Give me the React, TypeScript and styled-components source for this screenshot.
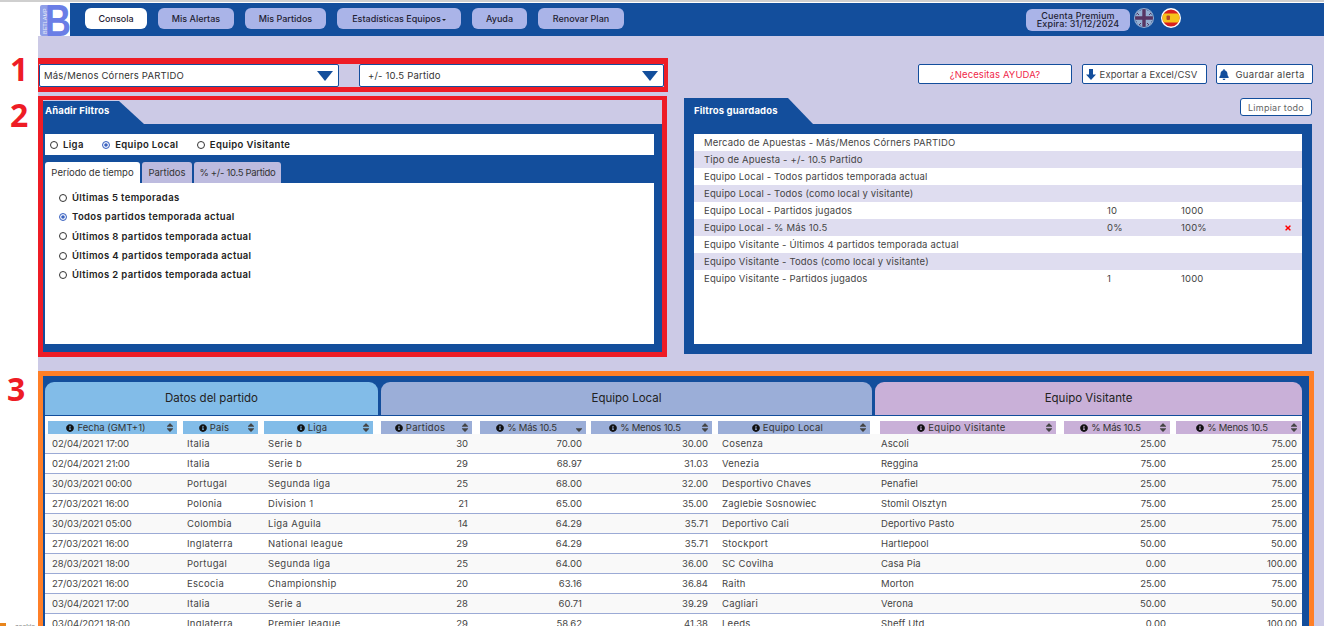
import React from 'react';
import styled, { createGlobalStyle } from 'styled-components';
import { FaInfoCircle, FaSort, FaSortDown, FaBell, FaTimes } from 'react-icons/fa';

const BLUE = '#134e9c';
const LAV = '#cccae6';
const FONT = `Inter, "Noto Sans", "Liberation Sans", sans-serif`;

const Global = createGlobalStyle`
  html, body { margin: 0; padding: 0; background: #fff; overflow: hidden; }
  * { box-sizing: border-box; }
  body { font-family: ${FONT}; color: #333; }
`;

const Page = styled.div`
  position: relative; width: 1324px; height: 626px; overflow: hidden;
  padding-left: 38px; background: #fff; border-top: 2px solid #cfcfcf;
`;
const Main = styled.div`
  height: 624px; background: ${LAV}; padding-top: 1px; margin-top: 0;
  box-shadow: inset 0 1px 0 #fff;
`;
const Nav = styled.nav`
  display: flex; align-items: flex-start; height: 33px; background: ${BLUE}; gap: 11px;
`;
const LogoBox = styled.div`
  width: 32px; height: 33px; background: #fff; margin-right: 4px; flex: none;
`;
const NavButton = styled.button<{ $w: number; $active?: boolean }>`
  width: ${p => p.$w}px; height: 21px; margin-top: 5px; border: 0; border-radius: 6px; padding: 0;
  background: ${p => (p.$active ? '#fff' : '#aab4e8')}; color: #1f2233;
  font: 500 9px ${FONT}; flex: none;
`;
const Caret = styled.span`
  display: inline-block; margin-left: 1px; vertical-align: 1px;
  border-left: 2.5px solid transparent; border-right: 2.5px solid transparent; border-top: 2.5px solid #222;
`;
const NavRight = styled.div`
  margin-left: auto; margin-right: 143px; display: flex; align-items: center; height: 33px; gap: 4px;
`;
const Premium = styled.div`
  width: 104px; height: 22px; margin-right: 0; border-radius: 6px; background: #aab4e8; color: #1f2233;
  font: 500 9px/8px ${FONT}; text-align: center; padding-top: 3px; letter-spacing: .15px;
`;
const Flag = styled.svg<{ $dim?: boolean; $first?: boolean }>`
  width: 20px; height: 20px; margin-top: -3px; flex: none;
  margin-left: ${p => (p.$first ? 0 : 3)}px;
  opacity: ${p => (p.$dim ? .55 : 1)};
  filter: ${p => (p.$dim ? 'saturate(.6)' : 'none')};
`;

const TopRow = styled.div`
  display: flex; align-items: flex-start; margin-top: 22px; height: 34px; padding-right: 11px;
`;
const SelectFrame = styled.div`
  display: flex; gap: 20px; width: 630px; height: 34px;
  border: solid #ee1c25; border-width: 6px 4px 5px 1px;
`;
const Select = styled.div<{ $w: number }>`
  width: ${p => p.$w}px; height: 23px; display: flex; align-items: center; justify-content: space-between;
  padding: 0 5px 0 4px; background: #fff; border: 1px solid ${BLUE}; border-radius: 2px;
  font: 400 9.5px ${FONT}; color: #333; letter-spacing: .2px;
`;
const SelectText = styled.span<{ $indent?: boolean }>`
  padding-left: ${p => (p.$indent ? 4 : 0)}px;
`;
const Arrow = styled.span`
  border-left: 8px solid transparent; border-right: 8px solid transparent; border-top: 10px solid ${BLUE};
`;
const Actions = styled.div`
  margin-left: auto; margin-top: 6px; display: flex; gap: 9.5px;
`;
const ActionButton = styled.button<{ $w: number; $red?: boolean }>`
  width: ${p => p.$w}px; height: 20px; display: flex; align-items: center; justify-content: center; gap: 4px;
  background: #fff; border: 1px solid ${BLUE}; border-radius: 2px; padding: 0;
  color: ${p => (p.$red ? '#f0284a' : '#444')}; font: 400 9.5px ${FONT}; letter-spacing: .1px;
  svg { color: ${BLUE}; flex: none; }
`;
const ExportAction = styled(ActionButton)`
  padding-right: 5px;
`;
const BellAction = styled(ActionButton)`
  gap: 6px; letter-spacing: .35px; padding-right: 5px;
`;
const ArrowGlyph = styled.svg`
  width: 10px; height: 11px; fill: ${BLUE};
`;
const BellGlyph = styled(FaBell)`
  width: 10px; height: 11px;
`;

const MidRow = styled.div`
  display: flex; align-items: flex-start; margin-top: 4px;
`;
const FilterFrame = styled.section`
  width: 629px; height: 261px; flex: none; border: solid #ee1c25; border-width: 4px 5px 5px 5px;
  display: flex; flex-direction: column;
`;
const TabShape = styled.div<{ $w: number }>`
  width: ${p => p.$w}px; flex: none; background: ${BLUE}; color: #fff; font: 700 9.5px ${FONT}; letter-spacing: .15px;
  display: flex; align-items: center; padding-bottom: 4px;
  clip-path: polygon(0 0, calc(100% - 25px) 0, 100% 100%, 0 100%);
`;
const FilterTab = styled(TabShape)`
  height: 23px; margin-top: 1px; padding-left: 2px;
`;
const FilterBody = styled.div`
  flex: 1; background: ${BLUE}; padding: 10px 8px 8px 2px; display: flex; flex-direction: column;
`;
const RadioBar = styled.div`
  height: 21px; background: #fff; display: flex; align-items: center; padding-left: 5px; gap: 18.5px;
`;
const RadioLabel = styled.label`
  display: flex; align-items: center; gap: 5px; font: 600 9.5px ${FONT}; color: #222; letter-spacing: .36px;
`;
const Dot = styled.span<{ $on?: boolean }>`
  width: 8px; height: 8px; border-radius: 50%; flex: none; background: #fff;
  border: 1px solid ${p => (p.$on ? '#3a62c0' : '#333')};
  box-shadow: ${p => (p.$on ? 'inset 0 0 0 1.2px #fff, inset 0 0 0 3px #3a62c0' : 'none')};
`;
const Tabs = styled.div`
  display: flex; gap: 2px; margin-top: 7px; height: 21px;
`;
const Tab = styled.div<{ $w: number; $active?: boolean; $tight?: boolean }>`
  width: ${p => p.$w}px; border-radius: 3px 3px 0 0; display: flex; align-items: center; justify-content: center;
  background: ${p => (p.$active ? '#fff' : '#bdbbdf')}; color: #333; font: 400 9.5px ${FONT};
  letter-spacing: ${p => (p.$tight ? '-.3px' : '0')};
`;
const TabPanel = styled.div`
  flex: 1; background: #fff; padding: 5px 0 0 14px; display: flex; flex-direction: column;
`;
const PeriodRow = styled(RadioLabel)<{ $h: number }>`
  height: ${p => p.$h}px;
`;

const SavedCol = styled.section`
  margin-left: 17px; width: 628px; padding-top: 2px; position: relative;
`;
const SavedHead = styled.div`
  display: flex; justify-content: space-between; align-items: flex-start; height: 26px;
`;
const SavedTab = styled(TabShape)`
  height: 26px; padding-left: 10px; padding-bottom: 2px;
`;
const ClearButton = styled.button`
  width: 72px; height: 18px; background: #fff; border: 1px solid ${BLUE}; border-radius: 3px; padding: 0;
  color: #666; font: 400 9px ${FONT}; letter-spacing: .25px;
`;
const SavedBody = styled.div`
  height: 230px; background: ${BLUE}; padding: 10px;
`;
const SavedList = styled.div`
  height: 210px; background: #fff;
`;
const SavedRow = styled.div`
  display: grid; grid-template-columns: 403px 74px 1fr 18px; align-items: center; height: 17px; padding-left: 10px;
  font: 400 9.5px ${FONT}; color: #444; letter-spacing: .17px;
  &:nth-child(even) { background: #dfddf0; }
  svg { color: #f00; width: 8px; height: 8px; display: block; }
`;

const TableFrame = styled.section`
  margin-top: 14px; width: 1276px; height: 260px; border: solid #ff7f27; border-width: 5px 5px 0 5px;
  background: ${BLUE}; padding: 6px 7px 0 2px; overflow: hidden;
`;
const Groups = styled.div`
  display: flex; gap: 3px; height: 33px;
`;
const Group = styled.div<{ $w: number; $bg: string }>`
  width: ${p => p.$w}px; background: ${p => p.$bg}; border-radius: 9px 9px 0 0; padding-bottom: 2px;
  display: flex; align-items: center; justify-content: center; font: 400 11.5px ${FONT}; color: #222;
`;
const TableArea = styled.div`
  margin-top: 1px; background: #fff; padding-top: 5px; height: 220px;
`;
const Row = styled.div<{ $cols: string }>`
  display: grid; grid-template-columns: ${p => p.$cols};
`;
const BodyRow = styled(Row)`
  height: 20px; border-bottom: 1px solid #9baad5;
  &:nth-child(odd) { background: #f9f9f9; }
`;
const HeadCell = styled.div<{ $l: number; $r: number; $bg: string; $sp: number }>`
  margin: 0 ${p => p.$r}px 0 ${p => p.$l}px; height: 13px; background: ${p => p.$bg};
  position: relative; display: flex; align-items: center; justify-content: center; gap: 3px;
  font: 400 9.5px ${FONT}; color: #333; padding-right: 13px; white-space: nowrap; letter-spacing: ${p => p.$sp}px;
`;
const InfoIcon = styled(FaInfoCircle)`
  width: 8px; height: 8px; color: #111; flex: none;
`;
const SortSlot = styled.span`
  position: absolute; right: 2px; top: 1px; display: flex; color: #444;
  svg { width: 10px; height: 11px; }
`;
const Cell = styled.div<{ $l: number; $r: number; $right?: boolean; $pad?: number; $sp?: number }>`
  margin: 0 ${p => p.$r}px 0 ${p => p.$l}px; padding: 0 4px 0 ${p => p.$pad ?? 4}px;
  text-align: ${p => (p.$right ? 'right' : 'left')}; font: 400 9.5px/19px ${FONT}; color: #444; white-space: nowrap;
  letter-spacing: ${p => p.$sp ?? 0}px;
`;
const Mark = styled.div<{ $top: number; $left: number }>`
  position: absolute; left: ${p => p.$left}px; top: ${p => p.$top}px; font: 700 32px/32px "Open Sans", sans-serif; color: #ee1c25;
`;
const CornerMark = styled.div`
  position: absolute; left: 0; bottom: -5px; display: flex; align-items: center; gap: 9px;
  font: 400 7px/8px "Liberation Sans", sans-serif; color: #777;
`;
const CornerSwatch = styled.span`
  width: 6px; height: 8px; background: #e8851c;
`;

const cols = [
  { t: 'Fecha (GMT+1)', w: 135, l: 3, r: 3, bg: '#82bce8', sp: -.1, hsp: 0 },
  { t: 'País', w: 81, l: 3, r: 3, bg: '#82bce8', sp: .3, hsp: .2 },
  { t: 'Liga', w: 116, l: 3, r: 4, bg: '#82bce8', sp: .35, hsp: .2 },
  { t: 'Partidos', w: 99, l: 4, r: 4, bg: '#9baed8', right: true, hsp: .3 },
  { t: '% Más 10.5', w: 112, l: 4, r: 2, bg: '#9baed8', right: true, sorted: true, hsp: -.2 },
  { t: '% Menos 10.5', w: 127, l: 3, r: 3, bg: '#9baed8', right: true, hsp: -.2 },
  { t: 'Equipo Local', w: 160, l: 3, r: 5, bg: '#9baed8', sp: .25, hsp: .2 },
  { t: 'Equipo Visitante', w: 185, l: 5, r: 4, bg: '#c9b0d8', sp: .1, pad: 1, hsp: .3 },
  { t: '% Más 10.5', w: 113, l: 4, r: 3, bg: '#c9b0d8', right: true, hsp: -.2 },
  { t: '% Menos 10.5', w: 129, l: 3, r: 1, bg: '#c9b0d8', right: true, hsp: -.2 },
];
const template = cols.map(c => `${c.w}px`).join(' ');

const rows = [
  ['02/04/2021 17:00', 'Italia', 'Serie b', '30', '70.00', '30.00', 'Cosenza', 'Ascoli', '25.00', '75.00'],
  ['02/04/2021 21:00', 'Italia', 'Serie b', '29', '68.97', '31.03', 'Venezia', 'Reggina', '75.00', '25.00'],
  ['30/03/2021 00:00', 'Portugal', 'Segunda liga', '25', '68.00', '32.00', 'Desportivo Chaves', 'Penafiel', '25.00', '75.00'],
  ['27/03/2021 16:00', 'Polonia', 'Division 1', '21', '65.00', '35.00', 'Zaglebie Sosnowiec', 'Stomil Olsztyn', '75.00', '25.00'],
  ['30/03/2021 05:00', 'Colombia', 'Liga Aguila', '14', '64.29', '35.71', 'Deportivo Cali', 'Deportivo Pasto', '25.00', '75.00'],
  ['27/03/2021 16:00', 'Inglaterra', 'National league', '29', '64.29', '35.71', 'Stockport', 'Hartlepool', '50.00', '50.00'],
  ['28/03/2021 18:00', 'Portugal', 'Segunda liga', '25', '64.00', '36.00', 'SC Covilha', 'Casa Pia', '0.00', '100.00'],
  ['27/03/2021 16:00', 'Escocia', 'Championship', '20', '63.16', '36.84', 'Raith', 'Morton', '25.00', '75.00'],
  ['03/04/2021 17:00', 'Italia', 'Serie a', '28', '60.71', '39.29', 'Cagliari', 'Verona', '50.00', '50.00'],
  ['03/04/2021 18:00', 'Inglaterra', 'Premier league', '29', '58.62', '41.38', 'Leeds', 'Sheff Utd', '0.00', '100.00'],
];

const saved: [string, string?, string?, boolean?][] = [
  ['Mercado de Apuestas - Más/Menos Córners PARTIDO'],
  ['Tipo de Apuesta - +/- 10.5 Partido'],
  ['Equipo Local - Todos partidos temporada actual'],
  ['Equipo Local - Todos (como local y visitante)'],
  ['Equipo Local - Partidos jugados', '10', '1000'],
  ['Equipo Local - % Más 10.5', '0%', '100%', true],
  ['Equipo Visitante - Últimos 4 partidos temporada actual'],
  ['Equipo Visitante - Todos (como local y visitante)'],
  ['Equipo Visitante - Partidos jugados', '1', '1000'],
];

const periods: [string, number, boolean?][] = [
  ['Últimas 5 temporadas', 19],
  ['Todos partidos temporada actual', 19, true],
  ['Últimos 8 partidos temporada actual', 20],
  ['Últimos 4 partidos temporada actual', 19],
  ['Últimos 2 partidos temporada actual', 19],
];

const Logo = () => (
  <LogoBox>
    <svg width="32" height="33" viewBox="0 0 32 33">
      <rect x="2" y="2" width="9" height="31" rx="2" fill="#8f9fe8" />
      <text transform="translate(8.5 31) rotate(-90)" fontSize="5.5" fontFamily="Liberation Sans" fill="#e6eafa">BETLAMP</text>
      <text transform="translate(7 33) scale(.8 1)" fontSize="45" fontWeight="700" fontFamily="Liberation Sans" fill="#6a7ee6">B</text>
    </svg>
  </LogoBox>
);

const FlagUK = () => (
  <Flag $dim $first viewBox="0 0 20 20">
    <defs><clipPath id="uk"><circle cx="10" cy="10" r="9" /></clipPath></defs>
    <circle cx="10" cy="10" r="10" fill="#fff" />
    <g clipPath="url(#uk)">
      <rect width="20" height="20" fill="#1d2f7a" />
      <path d="M0 2 18 20M20 2 2 20M2 0 20 18M18 0 0 18" stroke="#fff" strokeWidth="3" />
      <path d="M0 2 18 20M20 2 2 20" stroke="#c8102e" strokeWidth="1" />
      <path d="M10 0v20M0 10h20" stroke="#fff" strokeWidth="6" />
      <path d="M10 0v20M0 10h20" stroke="#c8102e" strokeWidth="3.4" />
    </g>
  </Flag>
);
const FlagES = () => (
  <Flag viewBox="0 0 20 20">
    <defs><clipPath id="es"><circle cx="10" cy="10" r="8.6" /></clipPath></defs>
    <circle cx="10" cy="10" r="10" fill="#fff" />
    <g clipPath="url(#es)">
      <rect width="20" height="20" fill="#d8201f" />
      <rect y="5.5" width="20" height="9" fill="#f7c21a" />
      <rect x="5.5" y="7.5" width="3.5" height="4.5" rx="1" fill="#b5482a" />
    </g>
  </Flag>
);

export default function App() {
  return (
    <>
      <Global />
      <Page>
        <Mark $top={51} $left={10}>1</Mark>
        <Mark $top={97} $left={10}>2</Mark>
        <Mark $top={371} $left={7}>3</Mark>
        <CornerMark><CornerSwatch /><span>cookie</span></CornerMark>
        <Main>
          <Nav>
            <Logo />
            <NavButton $w={62} $active>Consola</NavButton>
            <NavButton $w={76}>Mis Alertas</NavButton>
            <NavButton $w={81}>Mis Partidos</NavButton>
            <NavButton $w={124}>Estadísticas Equipos<Caret /></NavButton>
            <NavButton $w={55}>Ayuda</NavButton>
            <NavButton $w={86}>Renovar Plan</NavButton>
            <NavRight>
              <Premium>Cuenta Premium<br />Expira: 31/12/2024</Premium>
              <FlagUK />
              <FlagES />
            </NavRight>
          </Nav>
          <TopRow>
            <SelectFrame>
              <Select $w={300}><SelectText>Más/Menos Córners PARTIDO</SelectText><Arrow /></Select>
              <Select $w={305}><SelectText $indent>+/- 10.5 Partido</SelectText><Arrow /></Select>
            </SelectFrame>
            <Actions>
              <ActionButton $w={154} $red>¿Necesitas AYUDA?</ActionButton>
              <ExportAction $w={125}>
                <ArrowGlyph viewBox="0 0 10 11"><path d="M3 0h4v5.5h3L5 11 0 5.5h3z" /></ArrowGlyph>
                Exportar a Excel/CSV
              </ExportAction>
              <BellAction $w={97}><BellGlyph />Guardar alerta</BellAction>
            </Actions>
          </TopRow>
          <MidRow>
            <FilterFrame>
              <FilterTab $w={101}>Añadir Filtros</FilterTab>
              <FilterBody>
                <RadioBar>
                  <RadioLabel><Dot />Liga</RadioLabel>
                  <RadioLabel><Dot $on />Equipo Local</RadioLabel>
                  <RadioLabel><Dot />Equipo Visitante</RadioLabel>
                </RadioBar>
                <Tabs>
                  <Tab $w={95} $active>Período de tiempo</Tab>
                  <Tab $w={50}>Partidos</Tab>
                  <Tab $w={87} $tight>% +/- 10.5 Partido</Tab>
                </Tabs>
                <TabPanel>
                  {periods.map(([t, h, on]) => (
                    <PeriodRow key={t} $h={h}><Dot $on={on} />{t}</PeriodRow>
                  ))}
                </TabPanel>
              </FilterBody>
            </FilterFrame>
            <SavedCol>
              <SavedHead>
                <SavedTab $w={129}>Filtros guardados</SavedTab>
                <ClearButton>Limpiar todo</ClearButton>
              </SavedHead>
              <SavedBody>
                <SavedList>
                  {saved.map(([a, b, c, x]) => (
                    <SavedRow key={a}>
                      <span>{a}</span><span>{b}</span><span>{c}</span>
                      <span>{x && <FaTimes />}</span>
                    </SavedRow>
                  ))}
                </SavedList>
              </SavedBody>
            </SavedCol>
          </MidRow>
          <TableFrame>
            <Groups>
              <Group $w={333} $bg="#82bce8">Datos del partido</Group>
              <Group $w={491} $bg="#9baed8">Equipo Local</Group>
              <Group $w={427} $bg="#c9b0d8">Equipo Visitante</Group>
            </Groups>
            <TableArea>
              <Row $cols={template}>
                {cols.map((c, i) => (
                  <HeadCell key={i} $l={c.l} $r={c.r} $bg={c.bg} $sp={c.hsp}>
                    <InfoIcon />{c.t}
                    <SortSlot>{c.sorted ? <FaSortDown /> : <FaSort />}</SortSlot>
                  </HeadCell>
                ))}
              </Row>
              <div>
                {rows.map((r, i) => (
                  <BodyRow key={i} $cols={template}>
                    {r.map((v, j) => (
                      <Cell key={j} $l={cols[j].l} $r={cols[j].r} $right={cols[j].right} $pad={cols[j].pad} $sp={cols[j].sp}>{v}</Cell>
                    ))}
                  </BodyRow>
                ))}
              </div>
            </TableArea>
          </TableFrame>
        </Main>
      </Page>
    </>
  );
}
